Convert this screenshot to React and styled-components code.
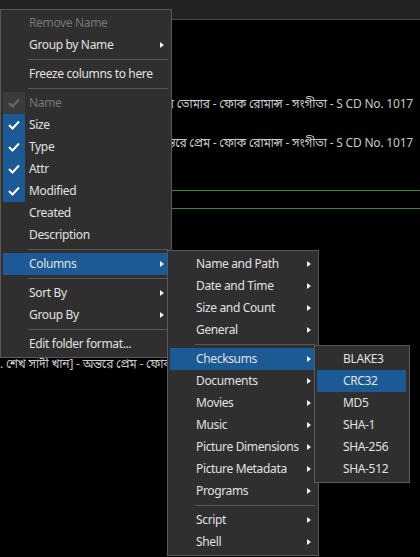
import styled, { createGlobalStyle } from "styled-components";

const Global = createGlobalStyle`
  html, body {
    margin: 0;
    padding: 0;
    background: #000;
  }
  body {
    font-family: "Segoe UI", "Noto Sans", "Noto Sans Bengali", sans-serif;
    font-size: 12px;
  }
`;

const Page = styled.div`
  position: relative;
  width: 420px;
  height: 557px;
  overflow: hidden;
  background: #000;
`;

const TopBar = styled.div`
  height: 19px;
  background: #232323;
  border-bottom: 1px solid #4b4b4b;
`;

const List = styled.div`
  display: flex;
  flex-direction: column;
`;

const Row = styled.div`
  height: 22px;
  margin-top: ${(p) => p.$gap}px;
  max-width: ${(p) => (p.$clip ? `${p.$clip}px` : "none")};
  display: flex;
  align-items: center;
  justify-content: ${(p) => (p.$right ? "flex-end" : "flex-start")};
  padding-right: ${(p) => (p.$right ? 7 : 0)}px;
  white-space: nowrap;
  overflow: hidden;
  color: #c9c9c9;
  letter-spacing: -0.2px;
`;

const FocusRow = styled.div`
  height: 17px;
  margin-top: ${(p) => p.$gap}px;
  border-top: 1px solid #3b8a1e;
  border-bottom: 1px solid #3b8a1e;
`;

const Menu = styled.div`
  position: absolute;
  left: ${(p) => p.$left}px;
  top: ${(p) => p.$top}px;
  width: ${(p) => p.$width}px;
  box-sizing: border-box;
  background: #2f2f2f;
  border: 1px solid #595959;
  padding: 2px 3px 2px 2px;
  z-index: ${(p) => p.$z};
`;

const Item = styled.div`
  height: 22px;
  display: flex;
  align-items: center;
  background: ${(p) => (p.$active ? "#1c5a96" : "transparent")};
  color: ${(p) => (p.$disabled ? "#767676" : "#e1e1e1")};
  white-space: nowrap;
  letter-spacing: -0.35px;
`;

const CheckCell = styled.div`
  width: 22px;
  height: 22px;
  flex: none;
  display: flex;
  align-items: center;
  justify-content: center;
  background: ${(p) =>
    p.$state === "on" ? "#1c5a96" : p.$state === "off" ? "#3b3b3b" : "transparent"};
`;

const Label = styled.span`
  margin-left: 4px;
  margin-top: -1px;
`;

const Arrow = styled.span`
  width: 0;
  height: 0;
  margin-left: auto;
  margin-right: 4px;
  border-top: 3.5px solid transparent;
  border-bottom: 3.5px solid transparent;
  border-left: 4px solid #f0f0f0;
`;

const Separator = styled.div`
  height: 1px;
  margin: 3px 0 3px 25px;
  background: #575757;
`;

const Check = ({ color }) => (
  <svg width="12" height="10" viewBox="0 0 12 10">
    <polyline
      points="1,5 4.5,8.5 11,1.5"
      fill="none"
      stroke={color}
      strokeWidth="2"
    />
  </svg>
);

const MenuItem = ({ label, active, disabled, sub, check }) => (
  <Item $active={active} $disabled={disabled}>
    <CheckCell $state={check}>
      {check === "on" && <Check color="#ffffff" />}
      {check === "off" && <Check color="#6a6a6a" />}
    </CheckCell>
    <Label>{label}</Label>
    {sub && <Arrow />}
  </Item>
);

const renderItems = (items) =>
  items.map((it, i) =>
    it === "-" ? <Separator key={i} /> : <MenuItem key={i} {...it} />
  );

const mainItems = [
  { label: "Remove Name", disabled: true },
  { label: "Group by Name", sub: true },
  "-",
  { label: "Freeze columns to here" },
  "-",
  { label: "Name", disabled: true, check: "off" },
  { label: "Size", check: "on" },
  { label: "Type", check: "on" },
  { label: "Attr", check: "on" },
  { label: "Modified", check: "on" },
  { label: "Created" },
  { label: "Description" },
  "-",
  { label: "Columns", sub: true, active: true },
  "-",
  { label: "Sort By", sub: true },
  { label: "Group By", sub: true },
  "-",
  { label: "Edit folder format..." },
];

const columnItems = [
  { label: "Name and Path", sub: true },
  { label: "Date and Time", sub: true },
  { label: "Size and Count", sub: true },
  { label: "General", sub: true },
  "-",
  { label: "Checksums", sub: true, active: true },
  { label: "Documents", sub: true },
  { label: "Movies", sub: true },
  { label: "Music", sub: true },
  { label: "Picture Dimensions", sub: true },
  { label: "Picture Metadata", sub: true },
  { label: "Programs", sub: true },
  "-",
  { label: "Script", sub: true },
  { label: "Shell", sub: true },
];

const checksumItems = [
  { label: "BLAKE3" },
  { label: "CRC32", active: true },
  { label: "MD5" },
  { label: "SHA-1" },
  { label: "SHA-256" },
  { label: "SHA-512" },
];

export default function App() {
  return (
    <Page>
      <Global />
      <TopBar />
      <List>
        <Row $gap={73} $right>
          আমার তোমার - ফোক রোমান্স - সংগীতা - S CD No. 1017
        </Row>
        <Row $gap={17} $right>
          অন্তরে প্রেম - ফোক রোমান্স - সংগীতা - S CD No. 1017
        </Row>
        <FocusRow $gap={36} />
        <Row $gap={144} $clip={167}>
          . শেখ সাদী খান] - অন্তরে প্রেম - ফোক রোমান্স - সংগীতা
        </Row>
      </List>

      <Menu $left={0} $top={9} $width={172} $z={1}>
        {renderItems(mainItems)}
      </Menu>
      <Menu $left={167} $top={250} $width={152} $z={2}>
        {renderItems(columnItems)}
      </Menu>
      <Menu $left={314} $top={345} $width={96} $z={3}>
        {renderItems(checksumItems)}
      </Menu>
    </Page>
  );
}
